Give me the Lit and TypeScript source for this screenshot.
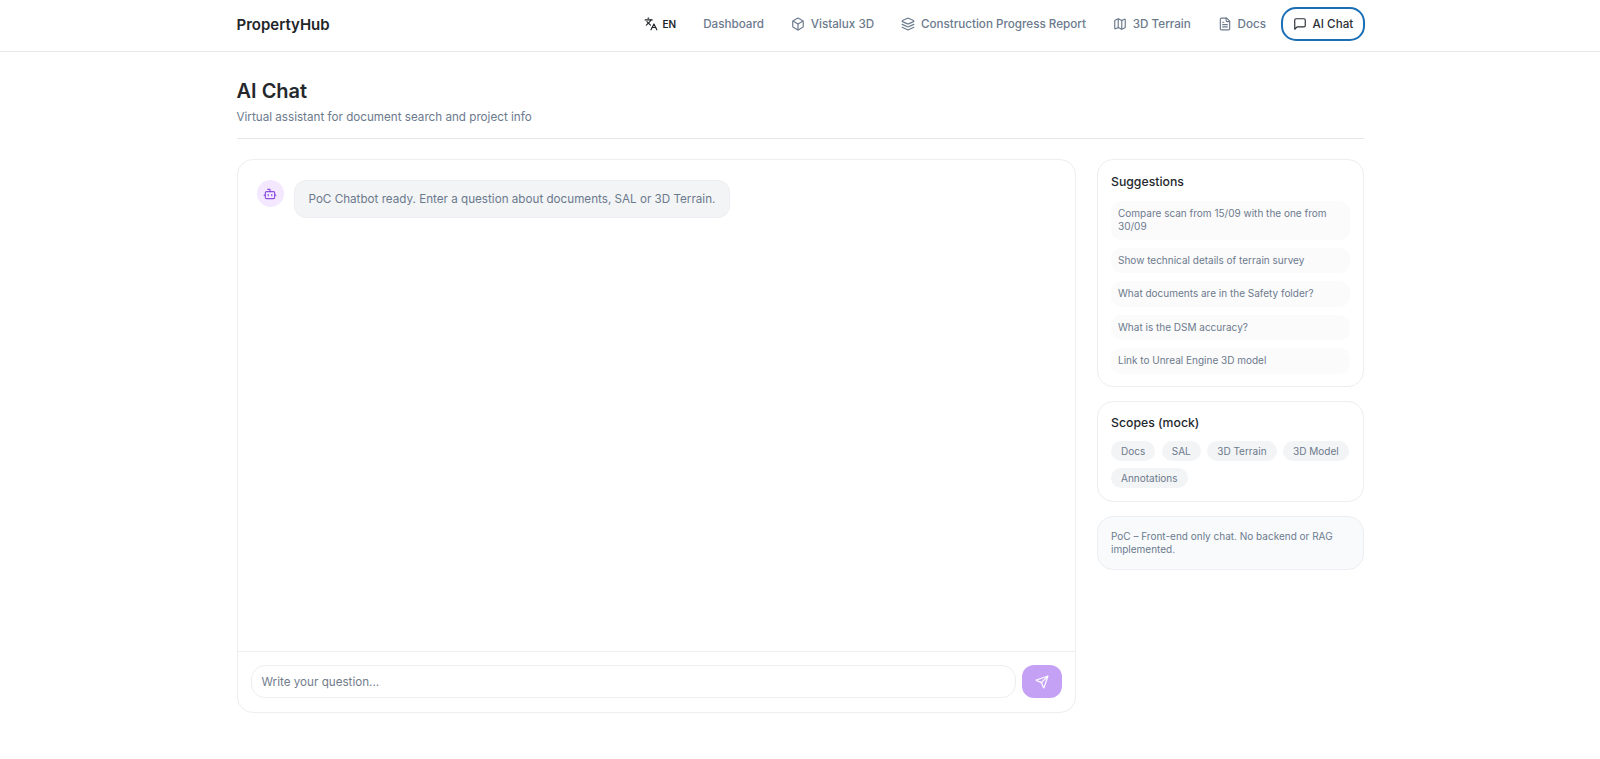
import { LitElement, css, html, svg } from "lit";
import { customElement } from "lit/decorators.js";

const icons = {
  languages: svg`<path d="m5 8 6 6"/><path d="m4 14 6-6 2-3"/><path d="M2 5h12"/><path d="M7 2h1"/><path d="m22 22-5-10-5 10"/><path d="M14 18h6"/>`,
  box: svg`<path d="M21 8a2 2 0 0 0-1-1.73l-7-4a2 2 0 0 0-2 0l-7 4A2 2 0 0 0 3 8v8a2 2 0 0 0 1 1.73l7 4a2 2 0 0 0 2 0l7-4A2 2 0 0 0 21 16Z"/><path d="m3.3 7 8.7 5 8.7-5"/><path d="M12 22V12"/>`,
  layers: svg`<path d="M12.83 2.18a2 2 0 0 0-1.66 0L2.6 6.08a1 1 0 0 0 0 1.83l8.58 3.91a2 2 0 0 0 1.66 0l8.58-3.9a1 1 0 0 0 0-1.83Z"/><path d="m22 17.65-9.17 4.16a2 2 0 0 1-1.66 0L2 17.65"/><path d="m22 12.65-9.17 4.16a2 2 0 0 1-1.66 0L2 12.65"/>`,
  map: svg`<path d="M14.106 5.553a2 2 0 0 0 1.788 0l3.659-1.83A1 1 0 0 1 21 4.619v12.764a1 1 0 0 1-.553.894l-4.553 2.277a2 2 0 0 1-1.788 0l-4.212-2.106a2 2 0 0 0-1.788 0l-3.659 1.83A1 1 0 0 1 3 19.381V6.618a1 1 0 0 1 .553-.894l4.553-2.277a2 2 0 0 1 1.788 0z"/><path d="M15 5.764v15"/><path d="M9 3.236v15"/>`,
  file: svg`<path d="M15 2H6a2 2 0 0 0-2 2v16a2 2 0 0 0 2 2h12a2 2 0 0 0 2-2V7Z"/><path d="M14 2v4a2 2 0 0 0 2 2h4"/><path d="M10 9H8"/><path d="M16 13H8"/><path d="M16 17H8"/>`,
  message: svg`<path d="M21 15a2 2 0 0 1-2 2H7l-4 4V5a2 2 0 0 1 2-2h14a2 2 0 0 1 2 2z"/>`,
  bot: svg`<path d="M12 8V4H8"/><rect width="16" height="12" x="4" y="8" rx="2"/><path d="M2 14h2"/><path d="M20 14h2"/><path d="M15 13v2"/><path d="M9 13v2"/>`,
  send: svg`<path d="M14.536 21.686a.5.5 0 0 0 .937-.024l6.5-19a.496.496 0 0 0-.635-.635l-19 6.5a.5.5 0 0 0-.024.937l7.93 3.18a2 2 0 0 1 1.112 1.11z"/><path d="m21.854 2.147-10.94 10.939"/>`,
};

type IconName = keyof typeof icons;

const icon = (name: IconName) => html`<svg class="icon" viewBox="0 0 24 24" fill="none" stroke="currentColor" stroke-width="2" stroke-linecap="round" stroke-linejoin="round">${icons[name]}</svg>`;

const navLinks: { label: string; icon?: IconName }[] = [
  { label: "Dashboard" },
  { label: "Vistalux 3D", icon: "box" },
  { label: "Construction Progress Report", icon: "layers" },
  { label: "3D Terrain", icon: "map" },
  { label: "Docs", icon: "file" },
];

const suggestions = [
  "Compare scan from 15/09 with the one from 30/09",
  "Show technical details of terrain survey",
  "What documents are in the Safety folder?",
  "What is the DSM accuracy?",
  "Link to Unreal Engine 3D model",
];

const scopes = ["Docs", "SAL", "3D Terrain", "3D Model", "Annotations"];

@customElement("app-root")
export class AppRoot extends LitElement {
  static styles = css`
    :host {
      display: block;
      min-height: 759px;
      background: #fff;
      color: #212529;
      font-family: Inter, "Noto Sans", sans-serif;
    }

    .icon {
      display: block;
      width: 14px;
      height: 14px;
      flex: none;
    }

    .topbar {
      height: 52px;
      box-sizing: border-box;
      border-bottom: 1px solid #e5e7eb;
    }

    .wrap {
      width: 1127px;
      margin: 0 auto;
      box-sizing: border-box;
    }

    .topbar .wrap {
      height: 48px;
      display: flex;
      align-items: center;
      justify-content: space-between;
    }

    .logo {
      font-size: 15px;
      font-weight: 600;
      color: #212529;
    }

    nav {
      display: flex;
      align-items: center;
      gap: 3px;
      margin-right: -1.5px;
    }

    .lang,
    .link {
      display: flex;
      align-items: center;
      gap: 5.75px;
      height: 34px;
      padding: 0 12px;
      box-sizing: border-box;
      font-size: 11.67px;
      font-weight: 500;
      color: #6c7a8d;
    }

    .lang {
      color: #212529;
      font-size: 10px;
      font-weight: 600;
      gap: 5px;
    }

    .link.active {
      color: #2b3036;
      border: 2px solid #1a6fb5;
      border-radius: 15px;
      padding: 0 9.75px;
    }

    main {
      padding-top: 25px;
    }

    h1 {
      margin: 0;
      font-size: 20px;
      line-height: 28px;
      font-weight: 600;
      color: #24282d;
    }

    .sub {
      margin: 3px 0 0;
      font-size: 11.67px;
      line-height: 18px;
      color: #6c7a8d;
    }

    .head {
      padding-bottom: 12px;
      border-bottom: 1px solid #e5e7eb;
      margin-bottom: 20px;
    }

    .cols {
      display: grid;
      grid-template-columns: 839px 266.5px;
      gap: 21.5px;
      align-items: start;
    }

    .card {
      border: 1px solid #eceef1;
      border-radius: 16px;
      box-sizing: border-box;
    }

    .chat {
      height: 554px;
      display: flex;
      flex-direction: column;
    }

    .messages {
      flex: 1;
      display: flex;
      align-items: flex-start;
      gap: 10px;
      padding: 20px 19px 0;
    }

    .avatar {
      width: 27px;
      height: 27px;
      border-radius: 50%;
      background: #f3e8ff;
      color: #8b4fe0;
      display: flex;
      align-items: center;
      justify-content: center;
    }

    .bubble {
      padding: 9px 14px;
      background: #f3f4f6;
      border: 1px solid #eceef1;
      border-radius: 12px;
      font-size: 11.67px;
      line-height: 18px;
      color: #6c7a8d;
    }

    .composer {
      display: flex;
      gap: 6.5px;
      padding: 13px 13px 14px;
      border-top: 1px solid #eceef1;
    }

    .input {
      flex: 1;
      height: 33px;
      box-sizing: border-box;
      padding: 1px 10px 0;
      display: flex;
      align-items: center;
      border: 1px solid #eceef1;
      border-radius: 14px;
      font-size: 11.67px;
      color: #737d8c;
    }

    .send {
      width: 39.5px;
      height: 33px;
      border-radius: 12px;
      background: #c4a1f5;
      color: #fff;
      display: flex;
      align-items: center;
      justify-content: center;
    }

    .side {
      display: flex;
      flex-direction: column;
      gap: 14px;
    }

    .panel {
      padding: 13px;
    }

    .panel.suggest {
      padding-bottom: 12.2px;
    }

    .panel.scopes {
      padding-top: 12px;
    }

    h2 {
      margin: 0 0 9px;
      font-size: 12.25px;
      line-height: 18px;
      font-weight: 500;
      color: #24282d;
    }

    .suggest h2 {
      margin-bottom: 10px;
    }

    .suggestions {
      display: flex;
      flex-direction: column;
      gap: 8.2px;
    }

    .suggestion {
      padding: 6px 7px;
      background: #fbfbfb;
      border-radius: 10px;
      font-size: 10px;
      line-height: 13.3px;
      color: #6c7a8d;
    }

    .chips {
      display: flex;
      flex-wrap: wrap;
      gap: 7px 6.5px;
    }

    .chip {
      padding: 0 10px;
      height: 20px;
      display: flex;
      align-items: center;
      background: #f3f4f6;
      border-radius: 10px;
      font-size: 10px;
      color: #6c7a8d;
    }

    .note {
      background: #f8fafc;
      font-size: 10px;
      line-height: 13.3px;
      color: #6c7a8d;
    }
  `;

  render() {
    return html`
      <header class="topbar">
        <div class="wrap">
          <div class="logo">PropertyHub</div>
          <nav>
            <div class="lang">${icon("languages")}<span>EN</span></div>
            ${navLinks.map((l) => html`<div class="link">${l.icon ? icon(l.icon) : ""}<span>${l.label}</span></div>`)}
            <div class="link active">${icon("message")}<span>AI Chat</span></div>
          </nav>
        </div>
      </header>
      <main class="wrap">
        <div class="head">
          <h1>AI Chat</h1>
          <p class="sub">Virtual assistant for document search and project info</p>
        </div>
        <div class="cols">
          <section class="card chat">
            <div class="messages">
              <div class="avatar">${icon("bot")}</div>
              <div class="bubble">PoC Chatbot ready. Enter a question about documents, SAL or 3D Terrain.</div>
            </div>
            <div class="composer">
              <div class="input">Write your question...</div>
              <div class="send">${icon("send")}</div>
            </div>
          </section>
          <aside class="side">
            <section class="card panel suggest">
              <h2>Suggestions</h2>
              <div class="suggestions">
                ${suggestions.map((s) => html`<div class="suggestion">${s}</div>`)}
              </div>
            </section>
            <section class="card panel scopes">
              <h2>Scopes (mock)</h2>
              <div class="chips">${scopes.map((s) => html`<div class="chip">${s}</div>`)}</div>
            </section>
            <section class="card panel note">PoC – Front-end only chat. No backend or RAG implemented.</section>
          </aside>
        </div>
      </main>
    `;
  }
}
